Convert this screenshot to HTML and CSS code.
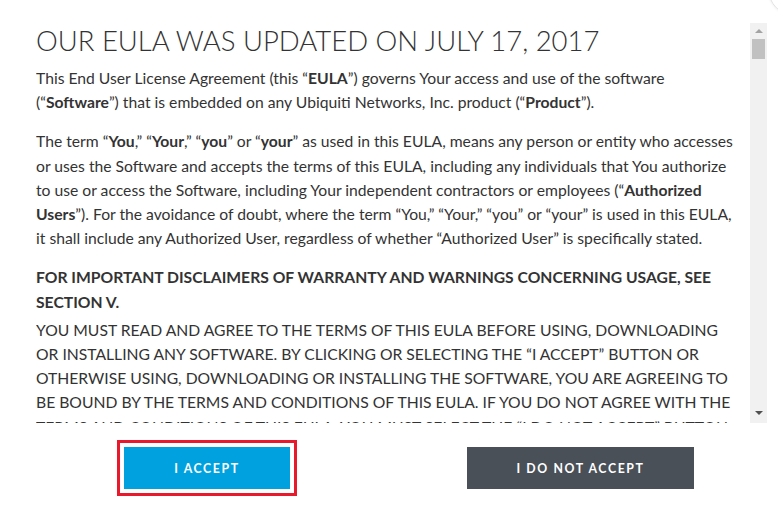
FILE: index.html
```html
<!DOCTYPE html>
<html>
  <head>
    <meta charset="utf-8" />
    <link rel="stylesheet" href="styles.css">
  </head>
  <body>
    <div class="modal">
      <span class="close-btn"></span>

      <div class="eula-box">
        <div class="eula-content">
          <h1 class="eula-title">OUR EULA WAS UPDATED ON JULY 17, 2017</h1>

          <p>
            This End User License Agreement (this &ldquo;<b>EULA</b>&rdquo;) governs Your access and use of the software
            (&ldquo;<b>Software</b>&rdquo;) that is embedded on any Ubiquiti Networks, Inc. product (&ldquo;<b>Product</b>&rdquo;).
          </p>

          <p>
            The term &ldquo;<b>You</b>,&rdquo; &ldquo;<b>Your</b>,&rdquo; &ldquo;<b>you</b>&rdquo; or &ldquo;<b>your</b>&rdquo; as used in this EULA, means any person or entity who accesses
            or uses the Software and accepts the terms of this EULA, including any individuals that You authorize
            to use or access the Software, including Your independent contractors or employees (&ldquo;<b>Authorized
            Users</b>&rdquo;). For the avoidance of doubt, where the term &ldquo;You,&rdquo; &ldquo;Your,&rdquo; &ldquo;you&rdquo; or &ldquo;your&rdquo; is used in this EULA,
            it shall include any Authorized User, regardless of whether &ldquo;Authorized User&rdquo; is specifically stated.
          </p>

          <p class="warning-head">
            FOR IMPORTANT DISCLAIMERS OF WARRANTY AND WARNINGS CONCERNING USAGE, SEE SECTION V.
          </p>

          <p class="warning">
            YOU MUST READ AND AGREE TO THE TERMS OF THIS EULA BEFORE USING, DOWNLOADING
            OR INSTALLING ANY SOFTWARE. BY CLICKING OR SELECTING THE &ldquo;I ACCEPT&rdquo; BUTTON OR
            OTHERWISE USING, DOWNLOADING OR INSTALLING THE SOFTWARE, YOU ARE AGREEING TO
            BE BOUND BY THE TERMS AND CONDITIONS OF THIS EULA. IF YOU DO NOT AGREE WITH THE
            TERMS AND CONDITIONS OF THIS EULA, YOU MUST SELECT THE &ldquo;I DO NOT ACCEPT&rdquo; BUTTON
            AND YOU MAY NOT USE, DOWNLOAD OR INSTALL THE SOFTWARE.
          </p>
        </div>

        <div class="scrollbar">
          <span class="arrow arrow-up"></span>
          <span class="thumb"></span>
          <span class="arrow arrow-down"></span>
        </div>
      </div>

      <div class="actions">
        <button class="btn btn-accept">I Accept</button>
        <button class="btn btn-decline">I Do Not Accept</button>
      </div>
    </div>
  </body>
</html>
```

FILE: styles.css
```css
body {
  margin: 0;
  font-family: Lato, "Open Sans", sans-serif;
  background: #fff;
  color: #333;
  overflow: hidden;
}

.modal {
  position: relative;
  width: 778px;
  height: 516px;
  overflow: hidden;
}

.close-btn {
  position: absolute;
  top: -38px;
  right: -44px;
  width: 52px;
  height: 52px;
  border-radius: 50%;
  border: 1px solid #e2e2e2;
  box-shadow: 0 0 3px rgba(0, 0, 0, 0.08);
}

.eula-box {
  display: flex;
  height: 400px;
  margin-top: 23px;
  padding-left: 36px;
  padding-right: 11px;
}

.eula-content {
  flex: 1;
  overflow: hidden;
  padding-right: 8px;
}

.eula-title {
  margin: 1px 0 9px 0;
  font-size: 27.5px;
  font-weight: 300;
  line-height: 1.2;
  color: #333;
}

.eula-content p {
  margin: 0 0 15px 0;
  font-size: 15.7px;
  line-height: 24.2px;
}

.eula-content b {
  font-weight: 700;
}

.eula-content .warning-head {
  font-weight: 700;
  margin-bottom: 4px;
}

.scrollbar {
  width: 17px;
  background: #f1f1f1;
  display: flex;
  flex-direction: column;
  align-items: center;
}

.arrow {
  width: 0;
  height: 0;
  border-left: 4px solid transparent;
  border-right: 4px solid transparent;
}

.arrow-up {
  margin-top: 6px;
  border-bottom: 4px solid #a3a3a3;
}

.arrow-down {
  margin-top: auto;
  margin-bottom: 8px;
  border-top: 4px solid #505050;
}

.thumb {
  width: 13px;
  height: 20px;
  margin-top: 6px;
  background: #c1c1c1;
}

.actions {
  display: flex;
  gap: 177px;
  padding: 24px 0 0 124px;
}

.btn {
  height: 42px;
  border: none;
  color: #fff;
  font-family: Lato, sans-serif;
  font-size: 12.3px;
  font-weight: 700;
  letter-spacing: 1.6px;
  text-transform: uppercase;
  cursor: pointer;
}

.btn-accept {
  width: 166px;
  background: #00a1df;
  outline: 3px solid #e8192c;
  outline-offset: 4px;
}

.btn-decline {
  width: 227px;
  background: #4a5058;
}
```
